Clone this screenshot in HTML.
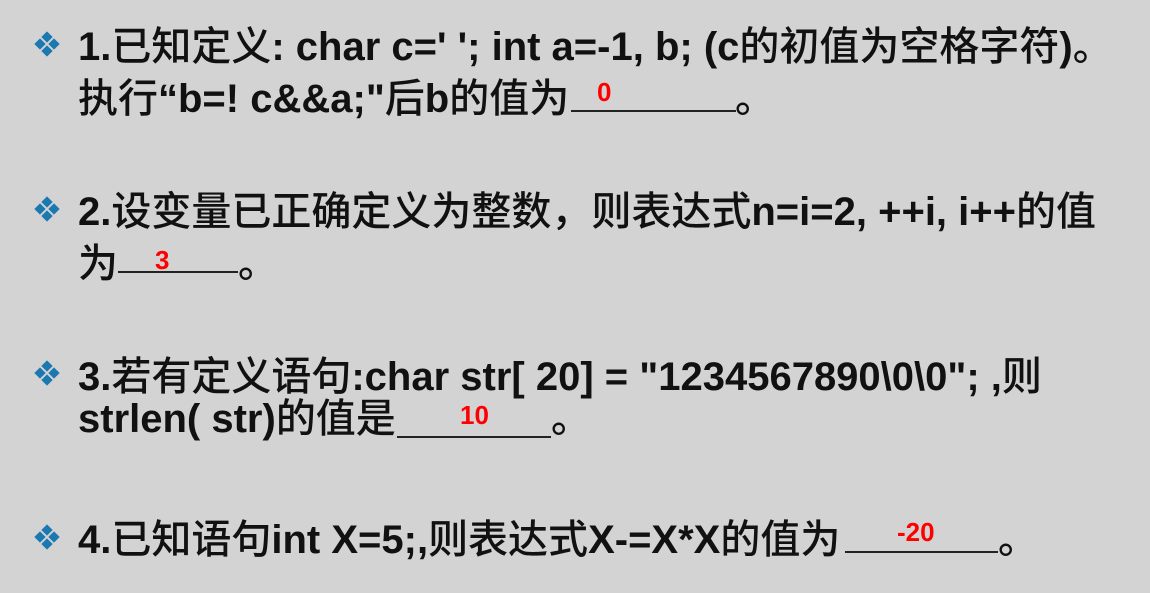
<!DOCTYPE html>
<html><head><meta charset="utf-8"><style>
body{margin:0;width:1150px;height:593px;background:#d3d3d3;overflow:hidden;position:relative;font-family:"Liberation Sans","Noto Sans CJK SC",sans-serif;}
.t{position:absolute;left:78px;font-size:40px;font-weight:bold;color:#111;white-space:nowrap;line-height:48px;}
.t i{font-style:normal;font-weight:500;}
.b{position:absolute;left:34px;width:28px;height:28px;}
.u{position:absolute;height:2px;background:#222;}
.r{position:absolute;color:#f00;font-weight:bold;font-size:26px;font-family:"Liberation Sans",sans-serif;}
</style></head><body>
<svg class="b" style="top:31px" viewBox="0 0 28 28"><g fill="#1b78b0"><rect x="9" y="2" width="8" height="8" transform="rotate(45 13 6)"/><rect x="9" y="16" width="8" height="8" transform="rotate(45 13 20)"/><rect x="2" y="9" width="8" height="8" transform="rotate(45 6 13)"/><rect x="16" y="9" width="8" height="8" transform="rotate(45 20 13)"/></g></svg>
<svg class="b" style="top:196px" viewBox="0 0 28 28"><g fill="#1b78b0"><rect x="9" y="2" width="8" height="8" transform="rotate(45 13 6)"/><rect x="9" y="16" width="8" height="8" transform="rotate(45 13 20)"/><rect x="2" y="9" width="8" height="8" transform="rotate(45 6 13)"/><rect x="16" y="9" width="8" height="8" transform="rotate(45 20 13)"/></g></svg>
<svg class="b" style="top:360px" viewBox="0 0 28 28"><g fill="#1b78b0"><rect x="9" y="2" width="8" height="8" transform="rotate(45 13 6)"/><rect x="9" y="16" width="8" height="8" transform="rotate(45 13 20)"/><rect x="2" y="9" width="8" height="8" transform="rotate(45 6 13)"/><rect x="16" y="9" width="8" height="8" transform="rotate(45 20 13)"/></g></svg>
<svg class="b" style="top:524px" viewBox="0 0 28 28"><g fill="#1b78b0"><rect x="9" y="2" width="8" height="8" transform="rotate(45 13 6)"/><rect x="9" y="16" width="8" height="8" transform="rotate(45 13 20)"/><rect x="2" y="9" width="8" height="8" transform="rotate(45 6 13)"/><rect x="16" y="9" width="8" height="8" transform="rotate(45 20 13)"/></g></svg>

<div class="t" style="top:23px">1.<i>已知定义</i>: char c=' '; int a=-1, b; (c<i>的初值为空格字符</i>)<i>。</i></div>
<div class="t" style="top:75px"><i>执行</i>“b=! c&amp;&amp;a;"<i>后</i>b<i>的值为</i></div>
<div class="u" style="left:571px;width:165px;top:110px"></div>
<div class="t" style="top:75px;left:735px"><i>。</i></div>
<div class="r" style="left:597px;top:77px">0</div>

<div class="t" style="top:188px">2.<i>设变量已正确定义为整数，则表达式</i>n=i=2, ++i, i++<i>的值</i></div>
<div class="t" style="top:240px"><i>为</i></div>
<div class="u" style="left:118px;width:120px;top:271px"></div>
<div class="t" style="top:240px;left:238px"><i>。</i></div>
<div class="r" style="left:155px;top:245px">3</div>

<div class="t" style="top:353px">3.<i>若有定义语句</i>:char str[ 20] = "1234567890\0\0"; ,<i>则</i></div>
<div class="t" style="top:395px">strlen( str)<i>的值是</i></div>
<div class="u" style="left:397px;width:154px;top:436px"></div>
<div class="t" style="top:395px;left:551px"><i>。</i></div>
<div class="r" style="left:460px;top:400px">10</div>

<div class="t" style="top:516px">4.<i>已知语句</i>int X=5;,<i>则表达式</i>X-=X*X<i>的值为</i></div>
<div class="u" style="left:845px;width:153px;top:551px"></div>
<div class="t" style="top:516px;left:998px"><i>。</i></div>
<div class="r" style="left:897px;top:517px">-20</div>
</body></html>
